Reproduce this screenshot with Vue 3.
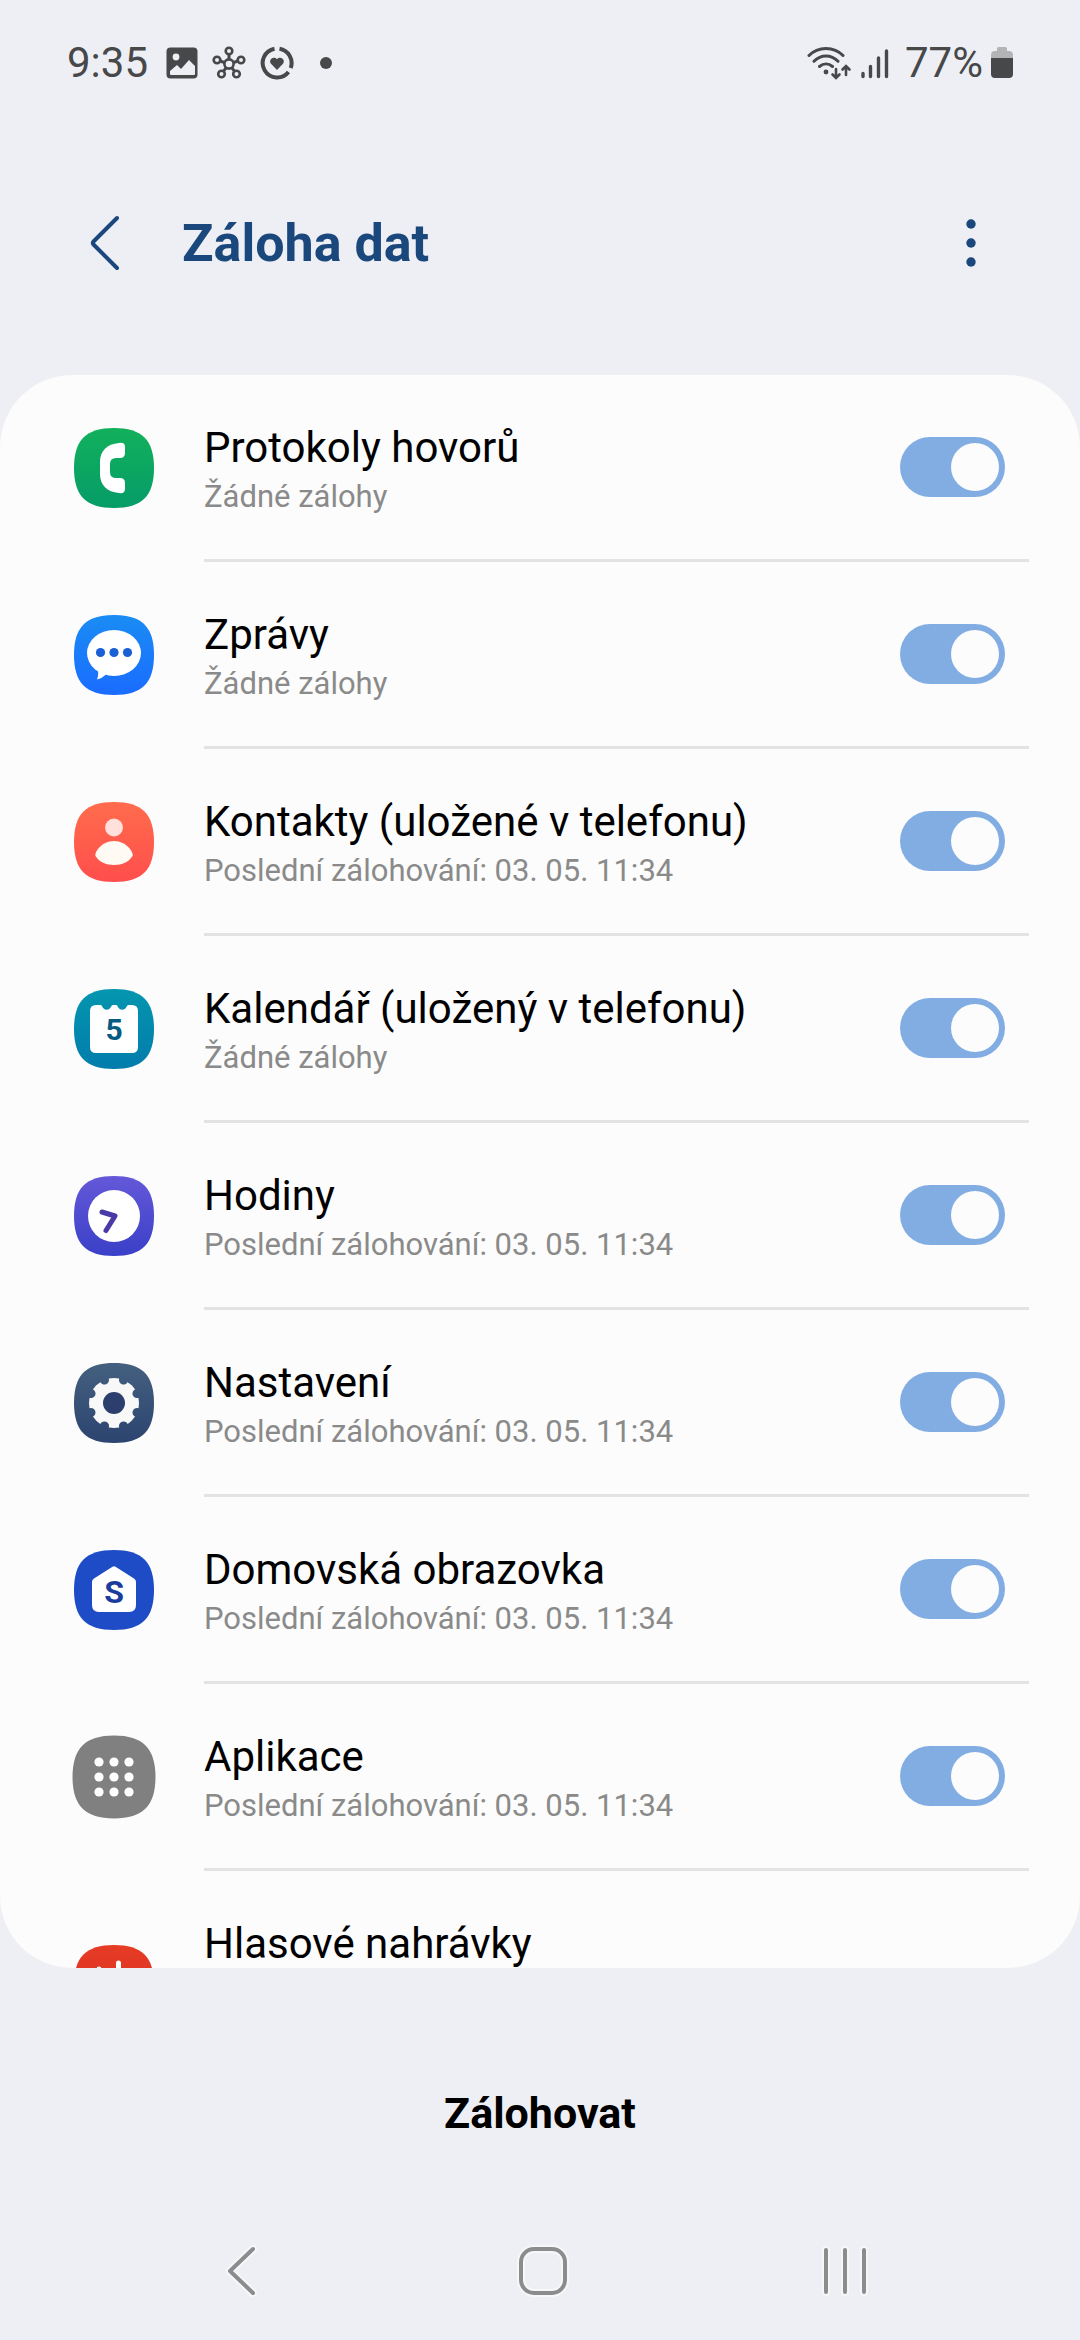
<script setup>
import { ref } from 'vue'

const last = 'Poslední zálohování: 03. 05. 11:34'
const none = 'Žádné zálohy'

const items = ref([
  { id: 'phone', title: 'Protokoly hovorů', note: none, on: true, colors: ['#12b05c', '#069c68'] },
  { id: 'messages', title: 'Zprávy', note: none, on: true, colors: ['#1a8cf4', '#1a6cff'] },
  { id: 'contacts', title: 'Kontakty (uložené v telefonu)', note: last, on: true, colors: ['#ff6c4c', '#ff4e4c'] },
  { id: 'calendar', title: 'Kalendář (uložený v telefonu)', note: none, on: true, colors: ['#0496ae', '#027cac'] },
  { id: 'clock', title: 'Hodiny', note: last, on: true, colors: ['#6458d8', '#3a40c8'] },
  { id: 'settings', title: 'Nastavení', note: last, on: true, colors: ['#44607f', '#2c4470'] },
  { id: 'home', title: 'Domovská obrazovka', note: last, on: true, colors: ['#1e4bc6', '#1e4bc6'] },
  { id: 'apps', title: 'Aplikace', note: last, on: true, colors: ['#808080', '#808080'] },
  { id: 'voice', title: 'Hlasové nahrávky', colors: ['#e63c26', '#d83020'] },
])

const squircle = 'M0 40C0 12 12 0 40 0S80 12 80 40 68 80 40 80 0 68 0 40Z'
const notches = [22.5, 67.5, 112.5, 157.5, 202.5, 247.5, 292.5, 337.5]
const grid = [25, 40, 55]
</script>

<template>
  <div class="screen">
    <div class="status">
      <div class="status-side">
        <span class="time clock">9:35</span>
        <svg width="32" height="34" viewBox="0 0 32 34">
          <rect x="0.5" y="1.5" width="31" height="31" rx="4" fill="#474849" />
          <circle cx="10" cy="11" r="3.4" fill="#eeeff4" />
          <path d="M4 28v-3l7-6 4 4 8-9 6 6v8q0 1-1 1H5q-1 0-1-1z" fill="#eeeff4" />
        </svg>
        <svg width="34" height="34" viewBox="0 0 34 34" fill="none" stroke="#474849" stroke-width="2.6">
          <circle cx="17" cy="18" r="4.6" />
          <circle cx="17" cy="5" r="3.3" />
          <circle cx="5" cy="14" r="3.3" />
          <circle cx="29" cy="14" r="3.3" />
          <circle cx="9.5" cy="28" r="3.3" />
          <circle cx="24.5" cy="28" r="3.3" />
          <path d="M17 8.5V13M8.3 15l4 1.5M25.7 15l-4 1.5M11.5 25.3l2.5-3.5M22.5 25.3L20 21.8" stroke-width="3" />
        </svg>
        <svg width="34" height="34" viewBox="0 0 34 34">
          <g fill="none" stroke="#474849" stroke-width="4">
            <path d="M14.500 2.700A14.500 14.500 0 1 0 28.500 26" />
            <path d="M19.500 2.700A14.500 14.500 0 0 1 30.700 22" />
          </g>
          <path d="M17 24l-6-6.200c-3-4 2.500-8.300 6-4.600 3.500-3.700 9 .6 6 4.600z" fill="#474849" />
        </svg>
        <span class="more-dot"></span>
      </div>
      <div class="status-side right">
        <svg class="signals" width="82" height="34" viewBox="0 0 82 34" fill="none" stroke="#474849" stroke-width="3" stroke-linecap="round">
          <path d="M2 9.500C11 0 27 0 36 9.500M7 15.300c7-7 17-7 24 0M12.500 20.500c4-3.500 9-3.500 13 0" />
          <circle cx="19" cy="26" r="2.400" fill="#474849" stroke="none" />
          <path d="M29 23v8.500M25.500 28.500l3.500 3.500 3.500-3.500M39 29v-8.500M35.500 23.500l3.500-3.500 3.500 3.500" stroke-width="2.600" />
          <path d="M56 27.500v3M63.500 20.500v10M71.500 12v18.500M79.500 5v25.500" stroke-width="3.400" />
        </svg>
        <span class="time">77%</span>
        <svg width="22" height="34" viewBox="0 0 22 34">
          <path d="M6 2.500q0-1.500 1.500-1.500h7q1.500 0 1.500 1.500V5h2q4 0 4 4v4H0V9q0-4 4-4h2z" fill="#b3b4b6" />
          <path d="M0 12h22v16q0 4-4 4H4q-4 0-4-4z" fill="#474849" />
        </svg>
      </div>
    </div>

    <header class="header">
      <button class="icon-btn" aria-label="Zpět">
        <svg width="32" height="60" viewBox="0 0 32 60" fill="none" stroke="#1a477c" stroke-width="4" stroke-linecap="round" stroke-linejoin="round">
          <path d="M27 5L3.500 28.500q-1.500 1.500 0 3L27 55" />
        </svg>
      </button>
      <h1>Záloha dat</h1>
      <button class="icon-btn" aria-label="Další možnosti">
        <svg width="12" height="60" viewBox="0 0 12 60" fill="#1a477c">
          <circle cx="6" cy="11" r="4.700" />
          <circle cx="6" cy="30" r="4.700" />
          <circle cx="6" cy="49" r="4.700" />
        </svg>
      </button>
    </header>

    <main class="card">
      <div v-for="item in items" :key="item.id" class="row" :class="{ tall: !item.note }">
        <svg class="app-icon" viewBox="-2 -2 84 84">
          <defs>
            <linearGradient :id="'bg-' + item.id" x1="0" y1="0" x2="0" y2="1">
              <stop offset="0" :stop-color="item.colors[0]" />
              <stop offset="1" :stop-color="item.colors[1]" />
            </linearGradient>
          </defs>
          <path
            :d="squircle"
            :fill="`url(#bg-${item.id})`"
            :stroke="item.id === 'apps' ? item.colors[0] : 'none'"
            stroke-width="3"
          />

          <path
            v-if="item.id === 'phone'"
            fill="#fff"
            d="M45 15q6-1 6 4v6q0 5-5 5h-4q-6 0-6 6v8q0 6 6 6h4q5 0 5 5v6q0 5-6 4C33 64 26 57 26 46V34C26 23 33 16 45 15z"
          />
          <g v-else-if="item.id === 'messages'">
            <ellipse cx="40" cy="38" rx="27" ry="23" fill="#fff" />
            <path d="M22 52q4 4 1 12.500 5-1 9-5z" fill="#fff" />
            <g fill="#1a5fd4">
              <circle cx="26.500" cy="37.500" r="4.600" />
              <circle cx="40" cy="37.500" r="4.600" />
              <circle cx="53.500" cy="37.500" r="4.600" />
            </g>
          </g>
          <g v-else-if="item.id === 'contacts'">
            <circle cx="40" cy="25.500" r="9" fill="#ffe0da" />
            <path d="M21.500 54C20 51 27 39 40 39s20 12 18.500 15C55 60 48 63 40 63S25 60 21.500 54z" fill="#fffaf4" />
          </g>
          <g v-else-if="item.id === 'calendar'">
            <path
              fill="#fff"
              d="M22 16h4.500q1.500 0 1.700 1.500a4.800 4.800 0 0 0 9 0Q37.500 16 39 16h3q1.500 0 1.700 1.500a4.800 4.800 0 0 0 9 0Q53 16 54.500 16H58q6 0 6 6v36q0 6-6 6H22q-6 0-6-6V22q0-6 6-6z"
            />
            <text x="40" y="51" class="glyph" fill="#065c80">5</text>
          </g>
          <g v-else-if="item.id === 'clock'">
            <circle cx="40" cy="40" r="26" fill="#fff" />
            <path d="M28 36l13 4-9 14.500" fill="none" stroke="#4a3aa8" stroke-width="5" stroke-linecap="round" stroke-linejoin="round" />
          </g>
          <g v-else-if="item.id === 'settings'">
            <mask id="gear">
              <circle cx="40" cy="40" r="25" fill="#fff" />
              <circle v-for="a in notches" :key="a" cx="40" cy="15" r="4.600" fill="#000" :transform="`rotate(${a} 40 40)`" />
            </mask>
            <rect x="14" y="14" width="52" height="52" fill="#f8f8f8" mask="url(#gear)" />
            <circle cx="40" cy="40" r="11" fill="#2c3f6c" />
          </g>
          <g v-else-if="item.id === 'home'">
            <path d="M38.500 16.700q1.500-1 3 0L60 28.500q2 1.300 2 3.500v23q0 7-7 7H25q-7 0-7-7V32q0-2.200 2-3.500z" fill="#fff" />
            <text x="40" y="53" class="glyph large" fill="#1a3c9c">S</text>
          </g>
          <g v-else-if="item.id === 'apps'" fill="#fff">
            <template v-for="y in grid" :key="y">
              <circle v-for="x in grid" :key="x" :cx="x" :cy="y" r="4.600" />
            </template>
          </g>
          <path v-else d="M25 24v30M35 34v12M44.500 18v43M55 30v20" stroke="#fff" stroke-width="5" stroke-linecap="round" />
        </svg>
        <div class="body">
          <label class="text" :for="item.note ? 'sw-' + item.id : undefined">
            <span class="title">{{ item.title }}</span>
            <span v-if="item.note" class="note">{{ item.note }}</span>
          </label>
          <input v-if="item.note" :id="'sw-' + item.id" v-model="item.on" class="switch" type="checkbox" role="switch" />
        </div>
      </div>
    </main>

    <footer class="action">
      <button class="backup">Zálohovat</button>
    </footer>

    <nav class="nav">
      <button class="icon-btn" aria-label="Zpět">
        <svg width="34" height="54" viewBox="0 0 34 54" fill="none" stroke-linecap="round" stroke-linejoin="round">
          <path v-for="s in ['halo', 'line']" :key="s" :class="s" d="M29 5L6 27l23 22" />
        </svg>
      </button>
      <button class="icon-btn" aria-label="Domů">
        <svg width="54" height="54" viewBox="0 0 54 54" fill="none">
          <rect v-for="s in ['halo', 'line']" :key="s" :class="s" x="5" y="5" width="44" height="44" rx="13" />
        </svg>
      </button>
      <button class="icon-btn" aria-label="Poslední aplikace">
        <svg width="50" height="54" viewBox="0 0 50 54" fill="none" stroke-linecap="round">
          <path v-for="s in ['halo', 'line']" :key="s" :class="s" d="M6 6v42M25 6v42M44 6v42" />
        </svg>
      </button>
    </nav>
  </div>
</template>

<style>
body {
  background: #eeeff4;
}
</style>

<style scoped>
.screen {
  display: flex;
  flex-direction: column;
  height: 100vh;
  background: #eeeff4;
  font-family: Roboto, "Liberation Sans", sans-serif;
  color: #000;
}
.status {
  flex: none;
  display: flex;
  justify-content: space-between;
  align-items: center;
  height: 126px;
  padding: 0 67px;
  box-sizing: border-box;
  color: #474849;
}
.status-side {
  display: flex;
  align-items: center;
  gap: 14px;
}
.right {
  gap: 8px;
}
.signals {
  margin-right: 8px;
}
.time {
  font-size: 42px;
  line-height: 48px;
}
.clock {
  margin-right: 4px;
}
.more-dot {
  width: 12px;
  height: 12px;
  margin-left: 12px;
  border-radius: 50%;
  background: #474849;
}
.header {
  flex: none;
  display: flex;
  align-items: center;
  height: 234px;
  margin-bottom: 15px;
  padding: 0 69px 0 66px;
}
.icon-btn {
  display: flex;
  align-items: center;
  justify-content: center;
  width: 80px;
  height: 96px;
  padding: 0;
  border: 0;
  background: none;
}
h1 {
  flex: 1;
  margin: 0 0 0 36px;
  padding-top: 2px;
  font-size: 52px;
  line-height: 60px;
  font-weight: 700;
  color: #1a477c;
}
.card {
  flex: 1;
  min-height: 0;
  overflow-y: auto;
  scrollbar-width: none;
  border-radius: 72px;
  background: #fcfcfc;
}
.row {
  display: flex;
  align-items: center;
  gap: 48px;
  padding: 0 51px 0 72px;
}
.app-icon {
  flex: none;
  width: 84px;
  height: 84px;
  margin-bottom: 2px;
}
.body {
  flex: 1;
  display: flex;
  align-items: center;
  justify-content: space-between;
  padding-right: 24px;
  border-bottom: 3px solid #e3e3e6;
}
.text {
  display: flex;
  flex-direction: column;
  padding: 47px 0 39px;
}
.tall .text {
  min-height: 140px;
}
.title {
  font-size: 42px;
  line-height: 52px;
}
.note {
  font-size: 31px;
  line-height: 46px;
  color: #8a8a8a;
}
.switch {
  appearance: none;
  flex: none;
  display: flex;
  width: 105px;
  height: 60px;
  margin: 0;
  padding: 6px;
  box-sizing: border-box;
  border-radius: 30px;
  background: #c4c6ca;
}
.switch::before {
  content: "";
  width: 48px;
  height: 48px;
  border-radius: 50%;
  background: #fcfcfc;
}
.switch:checked {
  justify-content: flex-end;
  background: #81ade3;
}
.glyph {
  font-size: 30px;
  font-weight: 700;
  text-anchor: middle;
}
.glyph.large {
  font-size: 32px;
}
.action {
  flex: none;
  display: flex;
  justify-content: center;
  height: 234px;
  padding-top: 56px;
  box-sizing: border-box;
}
.backup {
  padding: 0 60px;
  border: 0;
  background: none;
  font: 700 43px/52px Roboto, "Liberation Sans", sans-serif;
  color: #000;
}
.nav {
  flex: none;
  display: flex;
  justify-content: space-around;
  align-items: center;
  height: 138px;
  padding: 0 84px 0 90px;
}
.halo {
  stroke: #f7f7f9;
  stroke-width: 8px;
}
.line {
  stroke: #8b8c8e;
  stroke-width: 4px;
}
</style>
